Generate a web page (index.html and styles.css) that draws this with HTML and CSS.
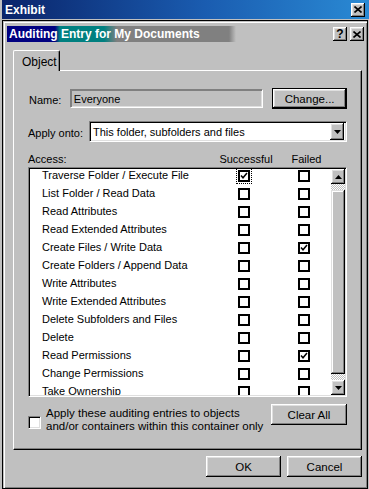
FILE: index.html
```html
<!DOCTYPE html>
<html lang="en">
<head>
    <meta charset="UTF-8">
    <title>Exhibit</title>
    <link rel="stylesheet" href="styles.css">
</head>
<body>
    <div class="window">
        <!-- outer title bar -->
        <div class="titlebar">
            <span class="title">Exhibit</span>
            <span class="tbtn">
                <svg width="8" height="7" viewBox="0 0 8 7"><path d="M0.5 0.5 L7.5 6.5 M7.5 0.5 L0.5 6.5" stroke="#000" stroke-width="1.6"/></svg>
            </span>
        </div>

        <div class="dialog">
            <div class="caption">
                <span class="caption-text">Auditing Entry for My Documents</span>
                <span class="cbtn help">?</span>
                <span class="cbtn">
                    <svg width="8" height="7" viewBox="0 0 8 7"><path d="M0.5 0.5 L7.5 6.5 M7.5 0.5 L0.5 6.5" stroke="#000" stroke-width="1.6"/></svg>
                </span>
            </div>

            <div class="tabs">
                <div class="tab">Object</div>
            </div>

            <div class="panel">
                <div class="form-row">
                    <label class="lbl lbl-name">Name:</label>
                    <div class="field">Everyone</div>
                    <button class="btn btn-default btn-change">Change...</button>
                </div>

                <div class="form-row apply-row">
                    <label class="lbl lbl-apply">Apply onto:</label>
                    <div class="combo">
                        <span class="combo-text">This folder, subfolders and files</span>
                        <span class="arrow-btn">
                            <svg width="7" height="4" viewBox="0 0 7 4"><polygon points="0,0 7,0 3.5,4" fill="#000"/></svg>
                        </span>
                    </div>
                </div>

                <div class="access-head">
                    <span class="h-access">Access:</span>
                    <span class="h-ok">Successful</span>
                    <span class="h-fail">Failed</span>
                </div>

                <div class="list">
                    <div class="rows" id="rows"></div>
                    <div class="scrollbar">
                        <span class="sb-btn">
                            <svg width="7" height="4" viewBox="0 0 7 4"><polygon points="0,4 7,4 3.5,0" fill="#000"/></svg>
                        </span>
                        <span class="sb-track"></span>
                        <span class="sb-thumb"></span>
                        <span class="sb-track"></span>
                        <span class="sb-btn">
                            <svg width="7" height="4" viewBox="0 0 7 4"><polygon points="0,0 7,0 3.5,4" fill="#000"/></svg>
                        </span>
                    </div>
                </div>

                <div class="bottom-row">
                    <span class="chk"></span>
                    <span class="chk-text">Apply these auditing entries to objects<br>and/or containers within this container only</span>
                    <button class="btn btn-clear">Clear All</button>
                </div>
            </div>

            <div class="actions">
                <button class="btn btn-action">OK</button>
                <button class="btn btn-action">Cancel</button>
            </div>
        </div>
    </div>

    <script>
        // daftar hak akses: [nama, successful, failed]
        const entries = [
            ['Traverse Folder / Execute File', true, false],
            ['List Folder / Read Data', false, false],
            ['Read Attributes', false, false],
            ['Read Extended Attributes', false, false],
            ['Create Files / Write Data', false, true],
            ['Create Folders / Append Data', false, false],
            ['Write Attributes', false, false],
            ['Write Extended Attributes', false, false],
            ['Delete Subfolders and Files', false, false],
            ['Delete', false, false],
            ['Read Permissions', false, true],
            ['Change Permissions', false, false],
            ['Take Ownership', false, false]
        ];

        const tick = '<svg width="8" height="8" viewBox="0 0 8 8"><path d="M1 3.5 L3 5.8 L7 1" fill="none" stroke="#000" stroke-width="1.5"/></svg>';

        function box(checked, focus) {
            return `<span class="cb${focus ? ' focus' : ''}">${checked ? tick : ''}</span>`;
        }

        const rows = document.getElementById('rows');
        entries.forEach((e, i) => {
            const row = document.createElement('div');
            row.className = 'row';
            row.innerHTML = `
                <span class="row-name">${e[0]}</span>
                ${box(e[1], i === 0)}
                <span class="cb-gap"></span>
                ${box(e[2], false)}
            `;
            rows.appendChild(row);
        });
    </script>
</body>
</html>
```

FILE: styles.css
```css
body {
    margin: 0;
    font-family: "Liberation Sans", Arial, sans-serif;
    font-size: 11px;
    color: #000;
}

.window {
    width: 369px;
    height: 489px;
    box-sizing: border-box;
    background: #c0c0c0;
    padding: 0 1px 1px 2px;
}

/* outer title bar */
.titlebar {
    height: 19px;
    margin-right: -1px;
    display: flex;
    align-items: center;
    padding: 0 4px 0 3px;
    background: linear-gradient(to right, #0a246a, #1a5cb0 55%, #2a8ad4);
}

.title {
    flex: 1;
    color: #fff;
    font-weight: bold;
    font-size: 12px;
    padding-top: 1px;
}

.tbtn, .cbtn, .arrow-btn, .sb-btn {
    display: flex;
    align-items: center;
    justify-content: center;
    background: #c0c0c0;
    box-shadow: inset -1px -1px #000, inset 1px 1px #fff, inset -2px -2px #808080, inset 2px 2px #dfdfdf;
    box-sizing: border-box;
}

.tbtn {
    width: 14px;
    height: 14px;
}

/* dialog */
.dialog {
    margin-top: 1px;
    height: 469px;
    box-sizing: border-box;
    border: 1px solid #000;
    box-shadow: inset 1px 1px #c0c0c0, inset 2px 2px #fff, inset -1px -1px #808080;
    padding: 5px 3px 0 4px;
}

.caption {
    height: 16px;
    display: flex;
    align-items: center;
    gap: 3px;
    background: linear-gradient(to right, #000080 0, #000080 48px, #008080 53px, #008080 97px, #808080 110px, #808080 222px, #c0c0c0 229px);
}

.caption-text {
    flex: 1;
    color: #fff;
    font-weight: bold;
    font-size: 12px;
    padding-left: 2px;
}

.cbtn {
    width: 14px;
    height: 14px;
}

.help {
    font-weight: bold;
    font-size: 12px;
}

/* tabs */
.tabs {
    margin: 8px 0 0 6px;
    display: flex;
}

.tab {
    position: relative;
    width: 47px;
    height: 21px;
    margin-bottom: -1px;
    box-sizing: border-box;
    padding: 4px 0 0 8px;
    background: #c0c0c0;
    border: 1px solid #fff;
    border-right-color: #000;
    border-bottom: none;
    border-radius: 2px 2px 0 0;
    box-shadow: inset -1px 0 #808080;
    font-size: 12px;
}

.panel {
    margin: 0 2px 0 6px;
    height: 380px;
    box-sizing: border-box;
    border: 1px solid #fff;
    border-right-color: #000;
    border-bottom-color: #000;
    box-shadow: inset -1px -1px #808080;
    padding: 17px 14px 0 14px;
}

.form-row {
    display: flex;
    align-items: center;
    height: 21px;
}

.lbl {
    padding-top: 2px;
}

.lbl-name {
    width: 41px;
    padding-left: 1px;
}

.lbl-apply {
    width: 61px;
}

.field {
    width: 194px;
    height: 19px;
    box-sizing: border-box;
    border: 1px solid;
    border-color: #808080 #fff #fff #808080;
    box-shadow: inset 1px 1px #808080, inset -1px -1px #dfdfdf;
    padding: 3px 0 0 3px;
}

.btn {
    font-family: "Liberation Sans", Arial, sans-serif;
    font-size: 11.5px;
    color: #000;
    background: #c0c0c0;
    border: none;
    padding: 0;
    box-shadow: inset -1px -1px #000, inset 1px 1px #fff, inset -2px -2px #808080, inset 2px 2px #dfdfdf;
}

.btn-default {
    border: 1px solid #000;
}

.btn-change {
    width: 75px;
    height: 21px;
    margin-left: 9px;
}

.apply-row {
    margin-top: 12px;
}

.combo {
    width: 258px;
    height: 21px;
    box-sizing: border-box;
    display: flex;
    align-items: center;
    background: #fff;
    border: 1px solid;
    border-color: #808080 #fff #fff #808080;
    box-shadow: inset 1px 1px #000, inset -1px -1px #dfdfdf;
    padding: 1px 2px 1px 3px;
}

.combo-text {
    flex: 1;
    padding-top: 1px;
}

.arrow-btn {
    width: 14px;
    height: 17px;
}

/* access list */
.access-head {
    display: flex;
    height: 25px;
    align-items: flex-end;
    line-height: 14px;
    padding-bottom: 1px;
    box-sizing: border-box;
}

.h-access {
    width: 188px;
}

.h-ok {
    width: 60px;
    text-align: center;
}

.h-fail {
    width: 41px;
    margin-left: 10px;
    text-align: center;
}

.list {
    height: 230px;
    box-sizing: border-box;
    display: flex;
    background: #fff;
    border: 1px solid;
    border-color: #808080 #fff #fff #808080;
    box-shadow: inset 1px 1px #000, inset -1px -1px #dfdfdf;
    padding: 1px;
}

.rows {
    flex: 1;
    overflow: hidden;
}

.row {
    display: flex;
    align-items: flex-start;
    height: 18px;
}

.row-name {
    width: 196px;
    padding-left: 12px;
    line-height: 13px;
}

.cb {
    width: 12px;
    height: 12px;
    margin-top: 1px;
    box-sizing: border-box;
    border: 2px solid #000;
    background: #fff;
    display: flex;
    align-items: center;
    justify-content: center;
}

.cb.focus {
    outline: 1px dotted #000;
    outline-offset: 1px;
}

.cb-gap {
    width: 48px;
}

.scrollbar {
    width: 14px;
    display: flex;
    flex-direction: column;
}

.sb-btn {
    height: 15px;
}

.sb-track {
    height: 6px;
    background: repeating-conic-gradient(#fff 0 25%, #c0c0c0 0 50%) 0 0 / 2px 2px;
}

.sb-thumb {
    flex: 1;
    background: #c0c0c0;
    box-shadow: inset -1px -1px #000, inset 1px 1px #dfdfdf, inset -2px -2px #808080, inset 2px 2px #fff;
}

/* bottom */
.bottom-row {
    display: flex;
    align-items: flex-start;
    margin-top: 7px;
}

.chk {
    width: 13px;
    height: 13px;
    margin-top: 12px;
    box-sizing: border-box;
    background: #fff;
    border: 1px solid;
    border-color: #808080 #fff #fff #808080;
    box-shadow: inset 1px 1px #000, inset -1px -1px #dfdfdf;
}

.chk-text {
    margin: 3px 0 0 5px;
    line-height: 13px;
    white-space: nowrap;
    font-size: 11.5px;
}

.btn-clear {
    margin-left: auto;
    width: 76px;
    height: 21px;
}

.actions {
    display: flex;
    justify-content: flex-end;
    gap: 6px;
    margin: 6px 2px 0 0;
}

.btn-action {
    width: 75px;
    height: 21px;
}
```
